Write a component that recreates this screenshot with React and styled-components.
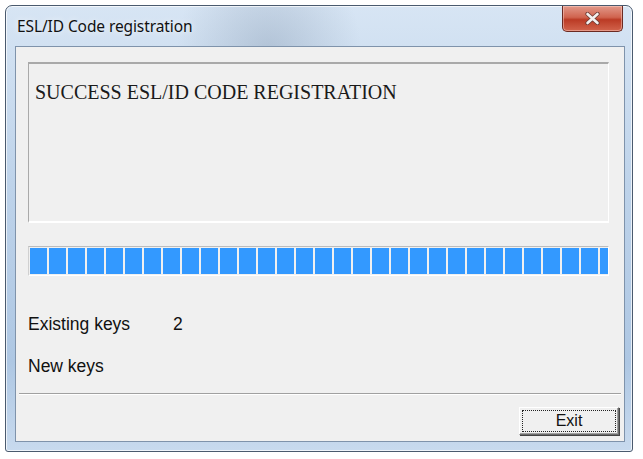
import React from 'react'
import styled, { createGlobalStyle } from 'styled-components'

const Global = createGlobalStyle`
  html, body {
    margin: 0;
    padding: 0;
    background: #ffffff;
  }
`

const Page = styled.div`
  width: 643px;
  height: 459px;
  padding: 5px 0 0 5px;
  box-sizing: border-box;
`

const Window = styled.div`
  width: 628px;
  height: 447px;
  box-sizing: border-box;
  border: 1px solid #4a5a6e;
  border-radius: 7px 7px 3px 3px;
  background:
    radial-gradient(ellipse at 42% 10%, rgba(120, 140, 165, 0.35), transparent 18%),
    linear-gradient(180deg, #d7e5f4 0%, #bed3ea 40%, #aec7e3 80%, #c8daee 100%);
  box-shadow: inset 0 0 0 1px rgba(255, 255, 255, 0.7);
  display: flex;
  flex-direction: column;
  padding: 0 7px 9px 9px;
`

const TitleBar = styled.div`
  height: 40px;
  display: flex;
  align-items: flex-start;
  justify-content: space-between;
`

const Title = styled.span`
  font-family: "Noto Sans", "Open Sans", sans-serif;
  font-size: 15.5px;
  color: #111;
  margin: 9px 0 0 2px;
  letter-spacing: -0.1px;
  text-shadow: 0 0 6px rgba(255, 255, 255, 0.9);
`

const CloseButton = styled.div`
  width: 61px;
  height: 26px;
  margin-right: 2px;
  box-sizing: border-box;
  border: 1px solid #6b2a22;
  border-top: none;
  border-radius: 0 0 5px 5px;
  background: linear-gradient(180deg, #e2998a 0%, #d0644f 45%, #bb3b25 55%, #d2644c 100%);
  box-shadow: inset 0 0 0 1px rgba(255, 220, 210, 0.45);
  display: flex;
  align-items: center;
  justify-content: center;
`

const Client = styled.div`
  flex: 1;
  background: #f0f0f0;
  border: 1px solid #7f93ab;
  display: flex;
  flex-direction: column;
  padding: 15px 15px 0 12px;
`

const MessageBox = styled.div`
  height: 161px;
  box-sizing: border-box;
  border-top: 2px solid #a9a9a9;
  border-left: 1px solid #a9a9a9;
  border-right: 1px solid #ffffff;
  border-bottom: 2px solid #ffffff;
  padding: 17px 6px;
  font-family: "Liberation Serif", "Times New Roman", serif;
  font-size: 20px;
  color: #1a1a1a;
`

const Progress = styled.div`
  margin-top: 23px;
  height: 30px;
  box-sizing: border-box;
  border-top: 1px solid #bcbcbc;
  border-left: 1px solid #d0d0d0;
  border-bottom: 1px solid #ffffff;
  border-right: 1px solid #ffffff;
  padding: 1px;
  display: flex;
  overflow: hidden;
`

const Block = styled.div`
  flex: none;
  width: 17px;
  height: 26px;
  margin-right: 2px;
  background: #3399ff;
`

const Row = styled.div`
  display: flex;
  align-items: center;
  height: 20px;
  margin-top: ${p => p.top}px;
  font-family: "Liberation Sans", Arial, sans-serif;
  font-size: 17.5px;
  color: #111;
`

const Label = styled.span`
  width: 145px;
`

const Separator = styled.div`
  margin: 17px -12px 0 -9px;
  border-top: 1px solid #a0a0a0;
  border-bottom: 1px solid #ffffff;
`

const Footer = styled.div`
  display: flex;
  justify-content: flex-end;
  padding-top: 12px;
  margin-right: -10px;
`

const Button = styled.button`
  width: 100px;
  height: 28px;
  box-sizing: border-box;
  background: #f0f0f0;
  border: 1px solid;
  border-color: #ffffff #6d6d6d #6d6d6d #ffffff;
  box-shadow: inset -1px -1px 0 #a0a0a0, 1px 1px 0 #444;
  padding: 2px;
  font-family: "Liberation Sans", Arial, sans-serif;
  font-size: 16px;
  color: #111;
`

const Focus = styled.span`
  display: flex;
  align-items: center;
  justify-content: center;
  height: 100%;
  border: 1px dotted #222;
  box-sizing: border-box;
`

const blocks = Array.from({ length: 31 })

export default function App() {
  return (
    <Page>
      <Global />
      <Window>
        <TitleBar>
          <Title>ESL/ID Code registration</Title>
          <CloseButton>
            <svg width="15" height="13" viewBox="0 0 15 13">
              <path d="M2.5 2 L12.5 11 M12.5 2 L2.5 11" stroke="#6a3a34" strokeWidth="4.2" strokeLinecap="round" />
              <path d="M2.5 2 L12.5 11 M12.5 2 L2.5 11" stroke="#f4f1f0" strokeWidth="2.6" strokeLinecap="round" />
            </svg>
          </CloseButton>
        </TitleBar>
        <Client>
          <MessageBox>SUCCESS ESL/ID CODE REGISTRATION</MessageBox>
          <Progress>
            {blocks.map((_, i) => (
              <Block key={i} />
            ))}
          </Progress>
          <Row top={38}>
            <Label>Existing keys</Label>
            <span>2</span>
          </Row>
          <Row top={22}>
            <Label>New keys</Label>
          </Row>
          <Separator />
          <Footer>
            <Button>
              <Focus>Exit</Focus>
            </Button>
          </Footer>
        </Client>
      </Window>
    </Page>
  )
}
